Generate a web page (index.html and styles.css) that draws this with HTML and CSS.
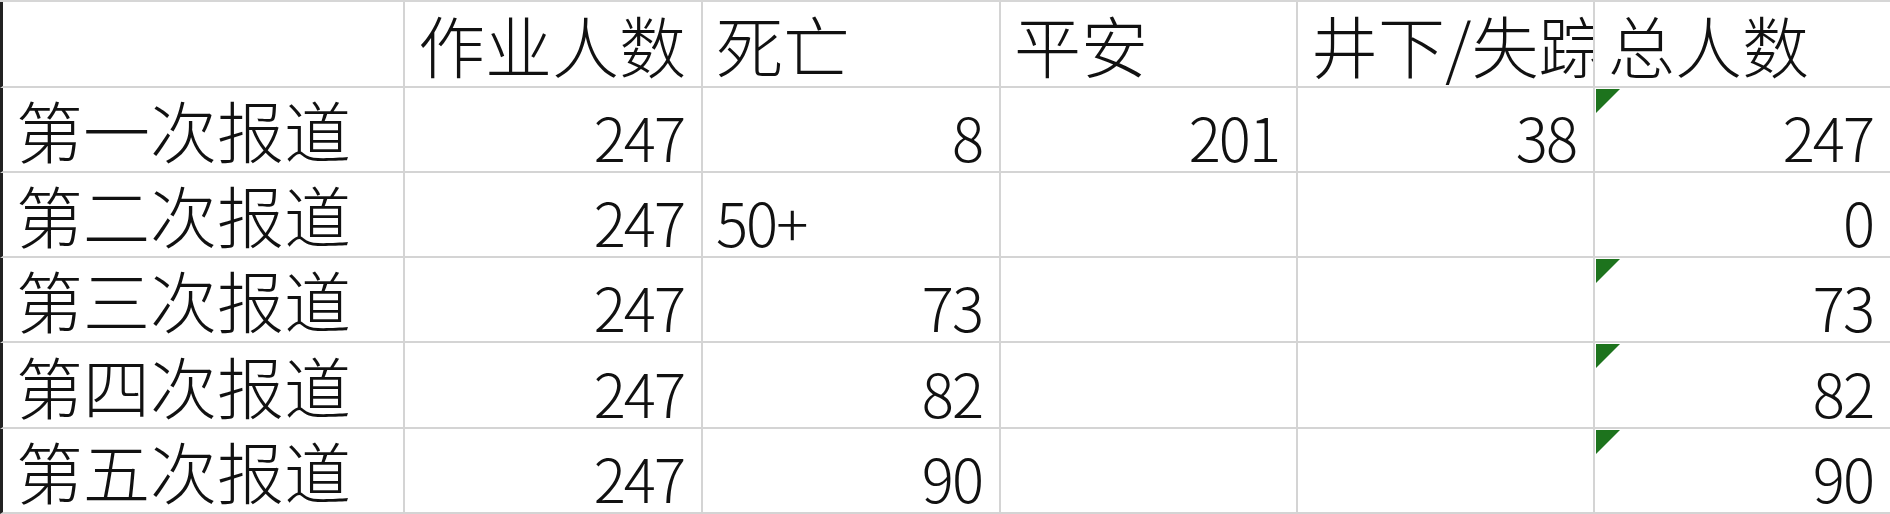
FILE: index.html
```html
<!DOCTYPE html>
<html lang="zh-CN">
<head>
<meta charset="utf-8">
<title>报道统计</title>
<link rel="stylesheet" href="styles.css">
</head>
<body>
<div class="sheet">
  <div class="cell first"></div>
  <div class="cell txt">作业人数</div>
  <div class="cell txt">死亡</div>
  <div class="cell txt">平安</div>
  <div class="cell txt clip">井下/失踪</div>
  <div class="cell txt">总人数</div>

  <div class="cell first txt">第一次报道</div>
  <div class="cell num">247</div>
  <div class="cell num">8</div>
  <div class="cell num">201</div>
  <div class="cell num">38</div>
  <div class="cell num flag">247</div>

  <div class="cell first txt">第二次报道</div>
  <div class="cell num">247</div>
  <div class="cell txt numtxt">50+</div>
  <div class="cell"></div>
  <div class="cell"></div>
  <div class="cell num">0</div>

  <div class="cell first txt">第三次报道</div>
  <div class="cell num">247</div>
  <div class="cell num">73</div>
  <div class="cell"></div>
  <div class="cell"></div>
  <div class="cell num flag">73</div>

  <div class="cell first txt">第四次报道</div>
  <div class="cell num">247</div>
  <div class="cell num">82</div>
  <div class="cell"></div>
  <div class="cell"></div>
  <div class="cell num flag">82</div>

  <div class="cell first txt">第五次报道</div>
  <div class="cell num">247</div>
  <div class="cell num">90</div>
  <div class="cell"></div>
  <div class="cell"></div>
  <div class="cell num flag">90</div>
</div>
</body>
</html>
```

FILE: styles.css
```css
html, body {
  margin: 0;
  padding: 0;
  background: #ffffff;
}

body {
  width: 1890px;
  height: 514px;
  overflow: hidden;
}

.sheet {
  display: grid;
  grid-template-columns: 405px 298px 298px 297px 297px 295px;
  grid-template-rows: 86px 85px 85px 85px 86px 85px;
  border-top: 2px solid #d6d6d6;
  font-family: "Noto Sans CJK SC", "Liberation Sans", sans-serif;
  font-weight: 300;
  color: #111111;
}

.cell {
  box-sizing: border-box;
  position: relative;
  display: flex;
  align-items: flex-end;
  border-right: 2px solid #d4d4d4;
  border-bottom: 2px solid #d4d4d4;
  white-space: nowrap;
  font-size: 67px;
  line-height: 1.1;
  padding-bottom: 5px;
}

.cell:nth-child(6n) {
  border-right: none;
}

.first {
  border-left: 3px solid #222222;
}

.txt {
  justify-content: flex-start;
  padding-left: 13px;
}

.clip {
  overflow: hidden;
}

.num {
  justify-content: flex-end;
  padding-right: 17px;
  font-size: 60px;
  letter-spacing: -2px;
  padding-bottom: 2px;
}

.numtxt {
  font-size: 60px;
  letter-spacing: -2px;
  padding-bottom: 2px;
}

.flag::before {
  content: "";
  position: absolute;
  top: 1px;
  left: 1px;
  width: 24px;
  height: 24px;
  background: #1d731d;
  clip-path: polygon(0 0, 100% 0, 0 100%);
}
```
